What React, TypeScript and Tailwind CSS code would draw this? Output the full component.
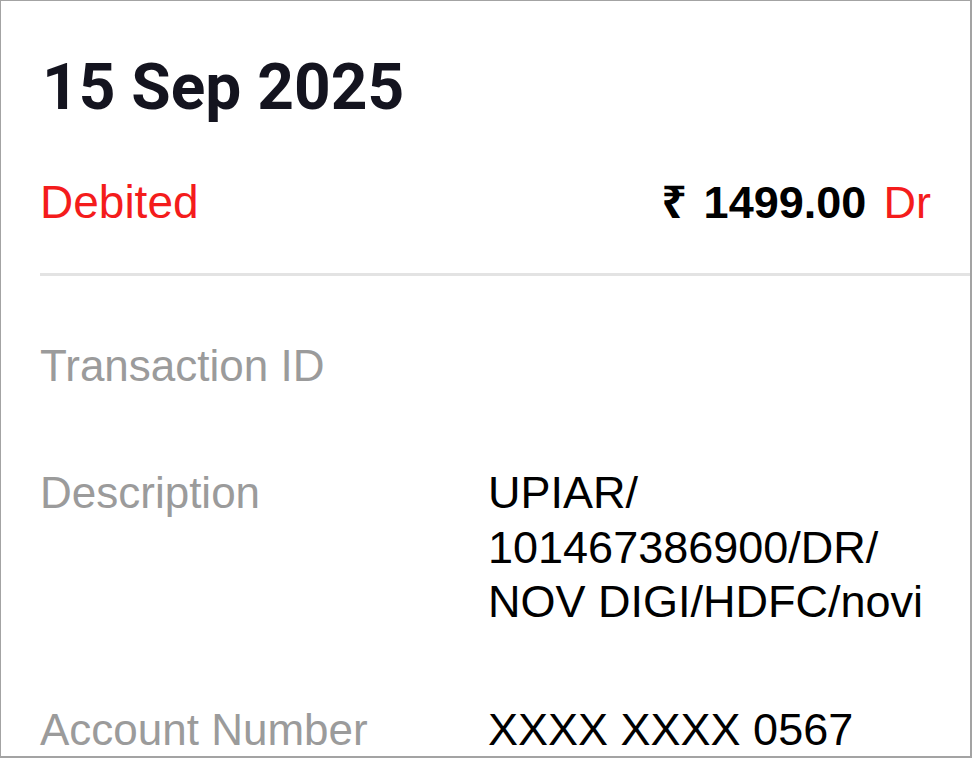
const SANS = "font-['Liberation_Sans',Arial,'Noto_Sans',sans-serif]"

function Row({ label, lines }: { label: string; lines: string[] }) {
  return (
    <>
      <div className="text-[44px] leading-[54px] text-[#9b9b9b]">{label}</div>
      <div className="text-[45px] leading-[54.5px] text-black">
        {lines.map((l) => (
          <div key={l}>{l}</div>
        ))}
      </div>
    </>
  )
}

export default function App() {
  return (
    <div
      className={`box-border h-[758px] w-[972px] overflow-hidden border-t border-l border-r-2 border-b-2 border-[#a3a3a3] bg-white ${SANS}`}
    >
      <div className="px-[39px] pt-[55px]">
        <h1 className="font-['Roboto',sans-serif] text-[64px] font-bold leading-[64px] text-[#14141f] pl-[2px]">
          15 Sep 2025
        </h1>

        <div className="mt-[55px] flex items-baseline justify-between text-[44px] leading-[52px]">
          <span className="text-[46px] text-[#f41c1c]">Debited</span>
          <span>
            <span className="font-bold text-black">
              <span className="font-['Noto_Sans',sans-serif]">₹</span>
              <span className="ml-[17px] text-[45px]">1499.00</span>
            </span>{' '}
            <span className="ml-[5px] text-[45px] text-[#f41c1c]">Dr</span>
          </span>
        </div>
      </div>

      <div className="ml-[39px] mt-[44px] h-[3px] bg-[#e3e3e3]" />

      <div className="mt-[63px] grid grid-cols-[448px_1fr] gap-y-[73px] px-[39px]">
        <Row label="Transaction ID" lines={[]} />
        <Row
          label="Description"
          lines={['UPIAR/', '101467386900/DR/', 'NOV DIGI/HDFC/novi']}
        />
        <Row label="Account Number" lines={['XXXX XXXX 0567']} />
      </div>
    </div>
  )
}
